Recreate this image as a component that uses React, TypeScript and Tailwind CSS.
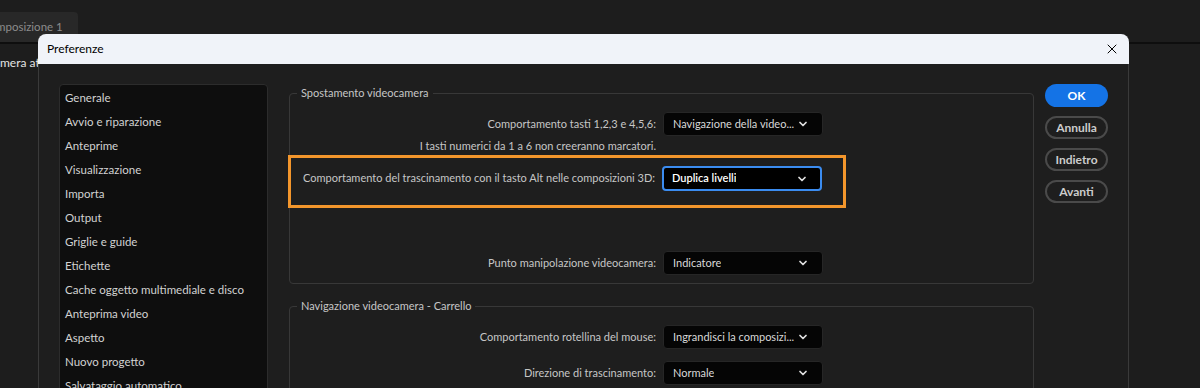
import { ChevronDown, X } from "lucide-react";

const sections = [
  "Generale",
  "Avvio e riparazione",
  "Anteprime",
  "Visualizzazione",
  "Importa",
  "Output",
  "Griglie e guide",
  "Etichette",
  "Cache oggetto multimediale e disco",
  "Anteprima video",
  "Aspetto",
  "Nuovo progetto",
  "Salvataggio automatico",
  "Memoria e prestazioni",
];

function Select({ value, active = false }: { value: string; active?: boolean }) {
  return (
    <div
      className={
        active
          ? "flex h-[25px] w-[160px] items-center justify-between rounded-[4px] border-2 border-[#3b8cf0] bg-black pl-[8px] pr-[12px] font-semibold text-white"
          : "flex h-[24px] w-[160px] items-center justify-between rounded-[4px] border border-[#262626] bg-[#050505] pl-[9px] pr-[13px] text-[#d8d8d8]"
      }
    >
      <span className="truncate">{value}</span>
      <ChevronDown className="h-[12px] w-[12px] shrink-0 text-[#e0e0e0]" strokeWidth={3.5} />
    </div>
  );
}

function Row({ label, value }: { label: string; value: string }) {
  return (
    <div className="flex items-center gap-[7px]">
      <div className="w-[366px] shrink-0 text-right text-[#c6c6c6]">{label}</div>
      <Select value={value} />
    </div>
  );
}

function Group({ title, children }: { title: string; children: React.ReactNode }) {
  return (
    <fieldset className="rounded-[4px] border border-[#383838]">
      <legend className="ml-[7px] px-[4px] leading-[16px] text-[#c6c6c6]">{title}</legend>
      {children}
    </fieldset>
  );
}

export default function App() {
  return (
    <div
      className="relative h-[388px] w-[1200px] overflow-hidden bg-[#1d1d1d] text-[11px]"
      style={{ fontFamily: "Lato, 'Noto Sans', sans-serif" }}
    >
      {/* app behind the dialog */}
      <div className="flex h-[44px] flex-col">
        <div className="mt-[12px] flex h-[30px] w-[78px] items-center rounded-tr-[4px] bg-[#282828] text-[11.5px] text-[#8c8c8c]">
          <span className="-ml-[4px]">mposizione 1</span>
        </div>
        <div className="h-[2px] w-full bg-[#0e0e0e]" />
      </div>
      <div className="mt-[10px] text-[12px] text-[#e4e4e4]">mera attiva</div>

      {/* dialog window */}
      <div className="absolute left-[38px] top-[34px] w-[1091px] overflow-hidden rounded-t-[8px]">
        <div className="flex h-[30px] items-center justify-between bg-[#f0f3f9] pl-[9px] pr-[9px] text-[12px] text-black">
          <span>Preferenze</span>
          <X className="h-[16px] w-[16px]" strokeWidth={1.5} />
        </div>
        <div className="flex h-[330px] border-x border-[#3a3a3a] bg-[#1e1e1e] pl-[20px] pr-[20px] pt-[20px]">
          <div className="h-[320px] w-[209px] shrink-0 rounded-[4px] border border-[#2c2c2c] bg-[#0e0e0e] pl-[5px] pt-[1px] text-[11.5px] text-[#d2d2d2]">
            {sections.map((s) => (
              <div key={s} className="flex h-[24px] items-center">
                {s}
              </div>
            ))}
          </div>

          <div className="ml-[21px] flex w-[745px] shrink-0 flex-col pt-[1px]">
            <Group title="Spostamento videocamera">
              <div className="mt-[11px]">
                <Row label="Comportamento tasti 1,2,3 e 4,5,6:" value="Navigazione della video..." />
              </div>
              <div className="h-[19px] pt-[3px] leading-[14px]">
                <div className="w-[366px] text-right text-[#c6c6c6]">
                  I tasti numerici da 1 a 6 non creeranno marcatori.
                </div>
              </div>
              <div className="-ml-[2px] w-[558px] border-[3px] border-[#f3962c] pb-[14px] pt-[8px]">
                <div className="flex items-center gap-[7px]">
                  <div className="w-[364px] shrink-0 whitespace-nowrap text-right text-[#c6c6c6]">
                    Comportamento del trascinamento con il tasto Alt nelle composizioni 3D:
                  </div>
                  <Select value="Duplica livelli" active />
                </div>
              </div>
              <div className="mb-[8px] mt-[43px]">
                <Row label="Punto manipolazione videocamera:" value="Indicatore" />
              </div>
            </Group>

            <div className="mt-[14px]">
              <Group title="Navigazione videocamera - Carrello">
                <div className="mt-[11px] flex flex-col gap-[12px] pb-[10px]">
                  <Row label="Comportamento rotellina del mouse:" value="Ingrandisci la composizi..." />
                  <Row label="Direzione di trascinamento:" value="Normale" />
                </div>
              </Group>
            </div>
          </div>

          <div className="ml-[11px] flex w-[63px] shrink-0 flex-col gap-[9px] text-[12px] font-bold">
            <div className="flex h-[23px] items-center justify-center rounded-full bg-[#1473e6] text-white">OK</div>
            <div className="flex h-[23px] items-center justify-center rounded-full border-2 border-[#4a4a4a] text-[#cccccc]">
              Annulla
            </div>
            <div className="flex h-[23px] items-center justify-center rounded-full border-2 border-[#4a4a4a] text-[#cccccc]">
              Indietro
            </div>
            <div className="flex h-[23px] items-center justify-center rounded-full border-2 border-[#4a4a4a] text-[#cccccc]">
              Avanti
            </div>
          </div>
        </div>
      </div>
    </div>
  );
}
